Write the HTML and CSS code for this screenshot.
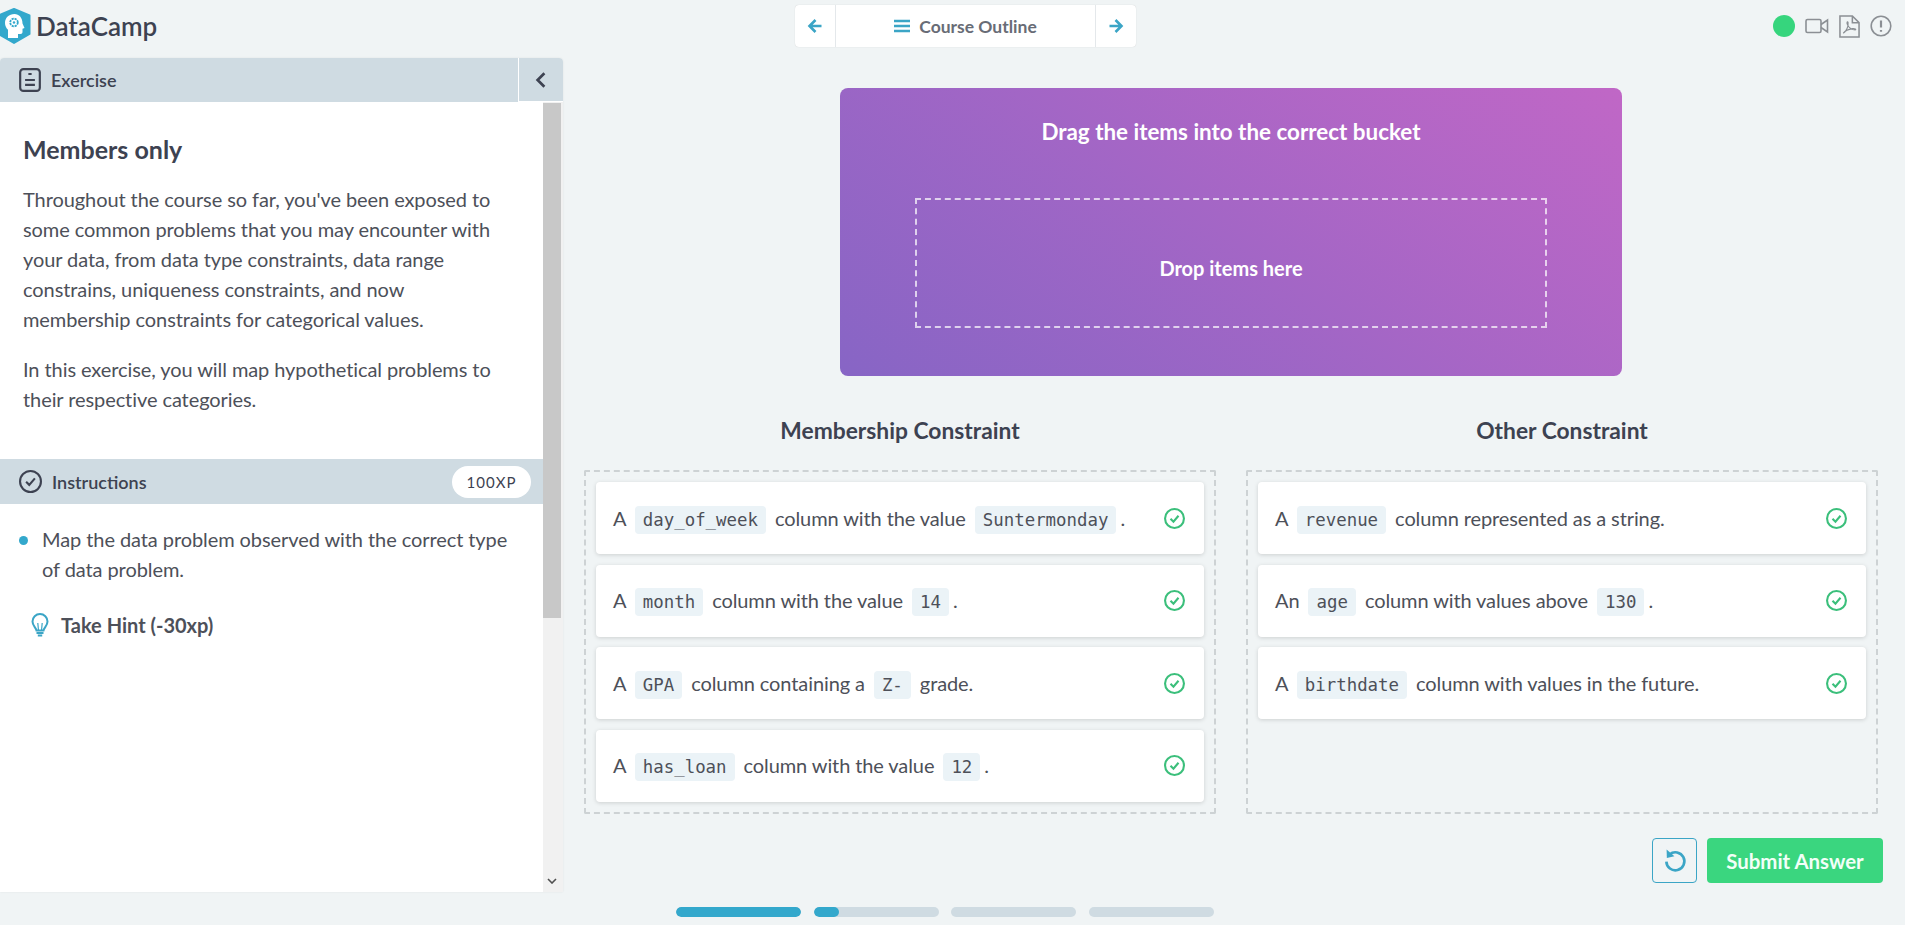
FILE: index.html
```html
<!DOCTYPE html>
<html lang="en">
<head>
  <meta charset="UTF-8" />
  <title>DataCamp</title>
  <link rel="stylesheet" href="styles.css">
</head>
<body>

<header class="topbar">
  <div class="brand">
    <svg class="brand-logo" viewBox="0 0 34 36">
      <path d="M17 1 32.500 7.500V26L17 35 1.500 26V7.500Z" fill="#33a8cc" stroke="#33a8cc" stroke-width="2" stroke-linejoin="round"/>
      <path d="M17.500 6c-5.500 0-9.500 3.800-9.500 9 0 3 1.300 5 3 6.800V30h10v-4h2.500c1.300 0 2-.8 2-2v-3.300l2-.8-2-4.500C25.500 9.700 22 6 17.500 6z" fill="#fff"/>
      <circle cx="17" cy="14.500" r="3.800" fill="none" stroke="#33a8cc" stroke-width="1.800" stroke-dasharray="2.200 .8"/>
      <circle cx="17" cy="14.500" r="1.200" fill="#33a8cc"/>
    </svg>
    <span class="brand-name">DataCamp</span>
  </div>
  <nav class="course-nav">
    <button class="nav-arrow">
      <svg viewBox="0 0 16 16" width="16" height="16"><path d="M14.500 8H3M8.500 2 2.500 8l6 6" class="arrow-line"/></svg>
    </button>
    <button class="nav-outline">
      <svg viewBox="0 0 16 14" width="16" height="14"><path d="M0 2h16M0 7h16M0 12h16" class="burger-line"/></svg>
      Course Outline
    </button>
    <button class="nav-arrow">
      <svg viewBox="0 0 16 16" width="16" height="16"><path d="M1.500 8H13M7.500 2l6 6-6 6" class="arrow-line"/></svg>
    </button>
  </nav>
  <div class="top-tools">
    <span class="status-dot"></span>
    <svg viewBox="0 0 24 16" width="24" height="16" class="tool-icon">
      <rect x="1" y="1.500" width="15" height="13" rx="1.500"/>
      <path d="M16 6.500 22.500 2v12L16 9.500"/>
    </svg>
    <svg viewBox="0 0 22 24" width="21" height="23" class="tool-icon">
      <path d="M1 1h13l7 7v15H1zM14 1v7h7"/>
      <path d="M4.500 19c3-1.500 5.500-7 5-11-.4-2-2-.5-.5 2.500 1.500 3 4 5 8 5 1.500 0-.2-1.800-3-1.300-3 .5-7.500 2.300-9.500 4.800z" class="pdf-mark"/>
    </svg>
    <svg viewBox="0 0 22 22" width="22" height="22" class="tool-icon">
      <circle cx="11" cy="11" r="9.800"/>
      <path d="M11 5.500v7M11 15v1.800" class="alert-mark"/>
    </svg>
  </div>
</header>

<div class="workspace">

  <aside class="side-panel">
    <div class="panel-head">
      <div class="panel-title">
        <svg viewBox="0 0 20 22" width="22" height="24" class="head-icon">
          <rect x="1" y="1" width="18" height="20" rx="3"/>
          <path d="M8.500 5.500h3M5.500 11h9M5.500 15.500h9"/>
        </svg>
        Exercise
      </div>
      <button class="collapse-btn">
        <svg viewBox="0 0 10 16" width="12" height="18"><path d="M8 2 2 8l6 6" class="chevron"/></svg>
      </button>
    </div>
    <div class="panel-scroll">
      <div class="panel-body">
        <div class="exercise-text">
          <h2>Members only</h2>
          <p>Throughout the course so far, you've been exposed to some common problems that you may encounter with your data, from data type constraints, data range constrains, uniqueness constraints, and now membership constraints for categorical values.</p>
          <p>In this exercise, you will map hypothetical problems to their respective categories.</p>
        </div>
        <div class="instructions-head">
          <div class="panel-title">
            <svg viewBox="0 0 22 22" width="23" height="23" class="head-icon">
              <circle cx="11" cy="11" r="10"/>
              <path d="M6.800 11.200 9.800 14.200 15.200 8"/>
            </svg>
            Instructions
          </div>
          <span class="xp-pill">100XP</span>
        </div>
        <ul class="instructions-list">
          <li>Map the data problem observed with the correct type of data problem.</li>
        </ul>
        <div class="hint">
          <svg viewBox="0 0 18 24" width="18" height="24" class="hint-icon">
            <path d="M5.500 17.500C5 14.500 1.500 12.800 1.500 8.500a7.500 7.500 0 0 1 15 0c0 4.300-3.500 6-4 9z"/>
            <path d="M7.500 17.500 6.800 10M10.500 17.500 11.200 10" class="hint-thin"/>
            <path d="M5.500 20h7M6.800 22.500h4.400"/>
          </svg>
          Take Hint (-30xp)
        </div>
      </div>
      <div class="scrollbar">
        <div class="scroll-thumb"></div>
        <svg viewBox="0 0 10 6" width="10" height="6" class="scroll-down"><path d="M1 1l4 4 4-4" /></svg>
      </div>
    </div>
  </aside>

  <main class="exercise-main">
    <section class="drop-card">
      <h3>Drag the items into the correct bucket</h3>
      <div class="drop-zone">Drop items here</div>
    </section>

    <div class="buckets">
      <section class="bucket">
        <h3>Membership Constraint</h3>
        <div class="bucket-box">
          <div class="item">
            <span class="item-text">A <code>day_of_week</code> column with the value <code>Suntermonday</code>.</span>
            <svg viewBox="0 0 20 20" class="ok-icon"><circle cx="10" cy="10" r="9"/><path d="M6.200 10.200 9 13l4.800-5.600"/></svg>
          </div>
          <div class="item">
            <span class="item-text">A <code>month</code> column with the value <code>14</code>.</span>
            <svg viewBox="0 0 20 20" class="ok-icon"><circle cx="10" cy="10" r="9"/><path d="M6.200 10.200 9 13l4.800-5.600"/></svg>
          </div>
          <div class="item">
            <span class="item-text">A <code>GPA</code> column containing a <code>Z-</code> grade.</span>
            <svg viewBox="0 0 20 20" class="ok-icon"><circle cx="10" cy="10" r="9"/><path d="M6.200 10.200 9 13l4.800-5.600"/></svg>
          </div>
          <div class="item">
            <span class="item-text">A <code>has_loan</code> column with the value <code>12</code>.</span>
            <svg viewBox="0 0 20 20" class="ok-icon"><circle cx="10" cy="10" r="9"/><path d="M6.200 10.200 9 13l4.800-5.600"/></svg>
          </div>
        </div>
      </section>

      <section class="bucket">
        <h3>Other Constraint</h3>
        <div class="bucket-box">
          <div class="item">
            <span class="item-text">A <code>revenue</code> column represented as a string.</span>
            <svg viewBox="0 0 20 20" class="ok-icon"><circle cx="10" cy="10" r="9"/><path d="M6.200 10.200 9 13l4.800-5.600"/></svg>
          </div>
          <div class="item">
            <span class="item-text">An <code>age</code> column with values above <code>130</code>.</span>
            <svg viewBox="0 0 20 20" class="ok-icon"><circle cx="10" cy="10" r="9"/><path d="M6.200 10.200 9 13l4.800-5.600"/></svg>
          </div>
          <div class="item">
            <span class="item-text">A <code>birthdate</code> column with values in the future.</span>
            <svg viewBox="0 0 20 20" class="ok-icon"><circle cx="10" cy="10" r="9"/><path d="M6.200 10.200 9 13l4.800-5.600"/></svg>
          </div>
        </div>
      </section>
    </div>

    <div class="actions">
      <button class="undo-btn">
        <svg viewBox="0 0 20 20" width="24" height="24"><path d="M5.500 4.500A7.500 7.500 0 1 1 2.800 10.500" class="undo-line"/><path d="M3 .5 3.200 7.500 9.500 6z" class="undo-head"/></svg>
      </button>
      <button class="submit-btn">Submit Answer</button>
    </div>
  </main>

</div>

<div class="progress-row">
  <div class="progress-seg"><div class="progress-fill" style="width:100%"></div></div>
  <div class="progress-seg"><div class="progress-fill" style="width:20%"></div></div>
  <div class="progress-seg"></div>
  <div class="progress-seg"></div>
</div>

</body>
</html>
```

FILE: styles.css
```css
* {
  box-sizing: border-box;
}
body {
  margin: 0;
  height: 925px;
  overflow: hidden;
  font-family: 'Lato', 'Liberation Sans', sans-serif;
  font-size: 20px;
  background-color: #f0f4f5;
  color: #4d5059;
}
button {
  font-family: inherit;
  border: 0;
  background: none;
  padding: 0;
}

/* top bar */
.topbar {
  height: 58px;
  display: grid;
  grid-template-columns: 795px 341px 1fr;
  align-items: start;
}
.brand {
  display: flex;
  align-items: center;
  gap: 5px;
  height: 51px;
}
.brand-logo {
  width: 34px;
  height: 36px;
  margin-left: -3px;
}
.brand-name {
  font-size: 26px;
  font-weight: 600;
  color: #3d4251;
}
.course-nav {
  display: flex;
  height: 42px;
  margin-top: 5px;
  background: #fff;
  border-radius: 4px;
  box-shadow: 0 0 1px rgba(0,0,0,0.2);
}
.nav-arrow {
  width: 40px;
  display: flex;
  align-items: center;
  justify-content: center;
}
.arrow-line {
  fill: none;
  stroke: #3ba5c6;
  stroke-width: 2.600;
}
.burger-line {
  fill: none;
  stroke: #3ba5c6;
  stroke-width: 2.400;
}
.nav-outline {
  flex: 1;
  display: flex;
  align-items: center;
  justify-content: center;
  gap: 9px;
  font-size: 17.500px;
  font-weight: 700;
  color: #686c76;
  border-left: 1px solid #e4e8eb;
  border-right: 1px solid #e4e8eb;
}
.top-tools {
  display: flex;
  align-items: center;
  justify-content: flex-end;
  gap: 10px;
  height: 52px;
  padding-right: 13px;
}
.status-dot {
  width: 22px;
  height: 22px;
  border-radius: 50%;
  background: #36d57d;
}
.tool-icon {
  fill: none;
  stroke: #8b8f94;
  stroke-width: 1.600;
}
.pdf-mark {
  stroke-width: 1.200;
}
.alert-mark {
  stroke-width: 2.200;
}

.workspace {
  display: grid;
  grid-template-columns: 563px 1fr;
  height: 834px;
}

/* left panel */
.side-panel {
  display: flex;
  flex-direction: column;
  background: #fff;
  border-radius: 4px 4px 0 0;
  box-shadow: 0 0 2px rgba(0,0,0,0.08);
}
.panel-head {
  height: 44px;
  flex: none;
  display: flex;
  justify-content: space-between;
  background: #cfdbe2;
  border-radius: 4px 4px 0 0;
}
.panel-title {
  display: flex;
  align-items: center;
  gap: 10px;
  padding-left: 19px;
  font-size: 18px;
  font-weight: 600;
  color: #3d4251;
}
.head-icon {
  fill: none;
  stroke: #3d4251;
  stroke-width: 2;
}
.collapse-btn {
  width: 45px;
  display: flex;
  align-items: center;
  justify-content: center;
  border-left: 1px solid #fff;
  border-bottom: 1px solid #fff;
}
.chevron {
  fill: none;
  stroke: #3d4251;
  stroke-width: 2.400;
}
.panel-scroll {
  flex: 1;
  display: flex;
  min-height: 0;
}
.panel-body {
  flex: 1;
}
.exercise-text {
  height: 357px;
  padding: 32px 30px 0 23px;
}
.exercise-text h2 {
  margin: 0 0 20px;
  font-size: 25px;
  line-height: 30px;
  font-weight: 700;
  color: #3d4251;
}
.exercise-text p {
  margin: 0 0 20px;
  line-height: 30px;
  letter-spacing: -0.080px;
  color: #4d5059;
}
.instructions-head {
  height: 45px;
  display: flex;
  align-items: center;
  justify-content: space-between;
  background: #cfdbe2;
  padding-right: 12px;
}
.xp-pill {
  width: 79px;
  height: 32px;
  border-radius: 16px;
  background: #fff;
  display: flex;
  align-items: center;
  justify-content: center;
  font-size: 15px;
  letter-spacing: 1px;
  color: #3d4251;
}
.instructions-list {
  list-style: none;
  margin: 20px 0 0;
  padding: 0 24px 0 42px;
  line-height: 30px;
  letter-spacing: -0.080px;
}
.instructions-list li {
  position: relative;
}
.instructions-list li::before {
  content: "";
  position: absolute;
  left: -23px;
  top: 12px;
  width: 9px;
  height: 9px;
  border-radius: 50%;
  background: #33a8cc;
}
.hint {
  display: flex;
  align-items: center;
  gap: 12px;
  margin: 29px 0 0 31px;
  font-weight: 700;
  color: #4d5059;
}
.hint-icon {
  fill: none;
  stroke: #3ba5c6;
  stroke-width: 2;
}
.hint-thin {
  stroke-width: 1.200;
}
.scrollbar {
  width: 20px;
  flex: none;
  position: relative;
  background: #f1f1f1;
  padding: 1px 2px 0 0;
}
.scroll-thumb {
  height: 515px;
  background: #c8c8c8;
}
.scroll-down {
  position: absolute;
  left: 4px;
  bottom: 8px;
  fill: none;
  stroke: #505050;
  stroke-width: 1.600;
}

/* right side */
.exercise-main {
  padding: 30px 22px 0 21px;
}
.drop-card {
  width: 782px;
  height: 288px;
  margin-left: 256px;
  padding-top: 29px;
  border-radius: 8px;
  background: linear-gradient(37deg, #8765c5, #c067c6);
  color: #fff;
  text-align: center;
}
.drop-card h3 {
  margin: 0;
  font-size: 22.400px;
  line-height: 30px;
  font-weight: 700;
}
.drop-zone {
  width: 632px;
  height: 130px;
  margin: 51px auto 0;
  padding-top: 9px;
  border: 2px dashed rgba(255,255,255,0.7);
  display: flex;
  align-items: center;
  justify-content: center;
  font-size: 20px;
  font-weight: 700;
}
.buckets {
  display: grid;
  grid-template-columns: 632px 632px;
  gap: 30px;
  margin-top: 40px;
}
.bucket h3 {
  margin: 0 0 26px;
  text-align: center;
  font-size: 22.800px;
  line-height: 28px;
  font-weight: 700;
  color: #3d4251;
}
.bucket-box {
  height: 344px;
  padding: 10px;
  border: 2px dashed #cdd2d4;
  border-radius: 2px;
  display: flex;
  flex-direction: column;
  gap: 10.500px;
}
.item {
  height: 72px;
  flex: none;
  display: flex;
  align-items: center;
  justify-content: space-between;
  padding: 0 19px 0 17px;
  background: #fff;
  border-radius: 4px;
  box-shadow: 0 1px 4px rgba(0,0,0,0.15);
}
.item-text {
  padding-top: 3px;
  letter-spacing: -0.100px;
  color: #4d5059;
}
code {
  display: inline-block;
  margin: 0 4px;
  padding: 3px 8px;
  border-radius: 4px;
  background: #ebf3f7;
  font-family: 'DejaVu Sans Mono', 'Liberation Mono', monospace;
  font-size: 17.400px;
  line-height: 22px;
  letter-spacing: 0;
}
.ok-icon {
  width: 21px;
  height: 21px;
  fill: none;
  stroke: #3bbf7b;
  stroke-width: 2;
}
.actions {
  display: flex;
  justify-content: flex-end;
  gap: 10px;
  margin-top: 24px;
}
.undo-btn {
  width: 45px;
  height: 45px;
  display: flex;
  align-items: center;
  justify-content: center;
  border: 1px solid #3ba5c6;
  border-radius: 4px;
}
.undo-line {
  fill: none;
  stroke: #3ba5c6;
  stroke-width: 2.200;
}
.undo-head {
  fill: #3ba5c6;
}
.submit-btn {
  width: 176px;
  height: 45px;
  border-radius: 4px;
  background: #3ad67f;
  color: #f2fff8;
  font-size: 20.400px;
  font-weight: 700;
}

/* progress at the bottom */
.progress-row {
  display: flex;
  gap: 12.600px;
  padding: 15px 0 0 676px;
}
.progress-seg {
  width: 125px;
  height: 10px;
  border-radius: 5px;
  background: #cfdbe2;
  overflow: hidden;
}
.progress-fill {
  height: 100%;
  border-radius: 5px;
  background: #33a8cc;
}
```
